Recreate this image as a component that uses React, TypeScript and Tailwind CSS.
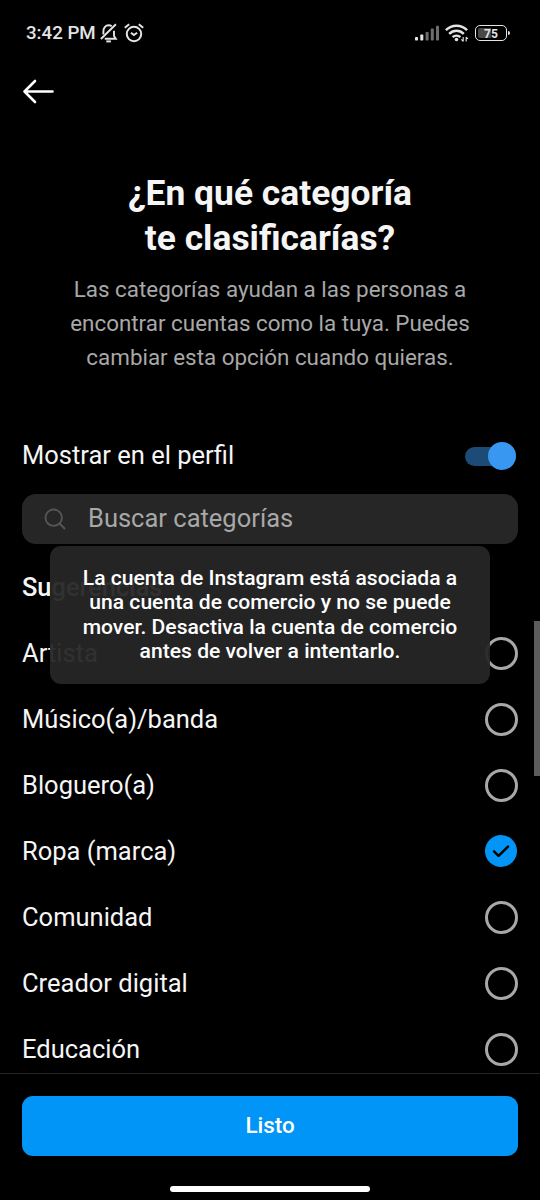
interface Category {
  name: string;
  selected?: boolean;
}

const categories: Category[] = [
  { name: 'Artista' },
  { name: 'Músico(a)/banda' },
  { name: 'Bloguero(a)' },
  { name: 'Ropa (marca)', selected: true },
  { name: 'Comunidad' },
  { name: 'Creador digital' },
  { name: 'Educación' },
];

function StatusBar() {
  return (
    <div className="flex h-[66px] shrink-0 items-center justify-between pl-[26px] pr-[30px] text-[#e4e4e4]">
      <div className="flex items-center">
        <span className="w-[74px] whitespace-nowrap pt-px text-[18.7px] font-medium leading-none">3:42 PM</span>
        {/* Silencio */}
        <svg width="18" height="20" viewBox="0 0 18 20" fill="none" stroke="currentColor" strokeWidth="1.9">
          <path d="M3.4 11.5V8.3C3.4 5 5.4 2.3 8.6 2.3c1.3 0 2.3.3 3.1.9M14 7.8V13l1.8 2.8H4.8" />
          <path d="M15.9 1.2.9 16" />
          <path d="M6.3 18.4h4.6" strokeWidth="2" />
        </svg>
        {/* Alarma */}
        <svg className="ml-[6px]" width="20" height="20" viewBox="0 0 20 20" fill="none" stroke="currentColor" strokeWidth="2">
          <circle cx="10" cy="11" r="7.2" />
          <path d="M.8 4.8 5.2 1.3M19.2 4.8l-4.4-3.5M7 9.7l2.9 2.4 3.2-2.4" />
        </svg>
      </div>

      <div className="flex items-center">
        <svg width="25" height="16" viewBox="0 0 25 16" fill="currentColor">
          <rect x="0" y="12" width="3" height="3.5" rx=".7" />
          <rect x="5.3" y="9.5" width="3" height="6" rx=".7" />
          <g fill="#6c6c6c">
            <rect x="10.6" y="7" width="3" height="8.5" rx=".7" />
            <rect x="15.8" y="3.6" width="3" height="11.9" rx=".7" />
            <rect x="21" y=".7" width="3" height="14.8" rx=".7" />
          </g>
        </svg>
        <svg className="ml-[5px]" width="24" height="18" viewBox="0 0 24 18" fill="none" stroke="currentColor" strokeWidth="2.5">
          <path d="M.9 6.2c6-5.9 15.2-5.9 21.2 0M4.2 9.9c4.2-4.1 10.4-4.1 14.6 0M7.6 13.2c2.3-2.1 5.5-2.1 7.8 0" />
          <circle cx="11.5" cy="15.5" r="1.8" fill="currentColor" stroke="none" />
          <path d="M18.2 13v4.4m-1.8-2 1.8 2M21.2 17.5V13m1.8 2-1.8-2" strokeWidth="1.1" />
        </svg>
        <div className="ml-[6px] flex h-[16px] w-[32px] items-center justify-center rounded-[5px] border-[1.5px] border-[#e4e4e4] bg-black p-[2px]">
          <span className="flex h-full w-full items-center justify-center rounded-[2px] bg-linear-to-r from-[#484848] from-50% to-black to-50% pt-px text-[12px] font-bold leading-none">
            75
          </span>
        </div>
        <span className="ml-px h-[4px] w-[2px] rounded-r bg-[#e4e4e4]" />
      </div>
    </div>
  );
}

function Radio({ selected }: { selected?: boolean }) {
  if (!selected) {
    return <span className="size-[33px] rounded-full border-3 border-[#a8a8a8]" />;
  }
  return (
    <span className="mr-px flex size-8 items-center justify-center rounded-full bg-[#0095f6]">
      <svg width="18" height="14" viewBox="0 0 18 14" fill="none" stroke="#000" strokeWidth="2.5" strokeLinecap="round" strokeLinejoin="round">
        <path d="M2 7.4 6.6 11.8 16 2.6" />
      </svg>
    </span>
  );
}

function Toast() {
  return (
    <div className="absolute left-[50px] top-[546px] h-[138px] w-[440px] rounded-[11px] bg-[#262626]/95 pt-[20px] text-center text-[21.1px] font-medium leading-[24.4px] text-white">
      La cuenta de Instagram está asociada a
      <br />
      una cuenta de comercio y no se puede
      <br />
      mover. Desactiva la cuenta de comercio
      <br />
      antes de volver a intentarlo.
    </div>
  );
}

export default function App() {
  return (
    <div className="relative flex h-[1200px] w-[540px] flex-col overflow-hidden bg-black font-['Roboto',sans-serif] text-[#f5f5f5]">
      <StatusBar />

      <header className="flex h-[50px] shrink-0 items-center pl-[22px]">
        <svg width="33" height="25" viewBox="0 0 33 25" fill="none" stroke="#fff" strokeWidth="2.6" strokeLinecap="round" strokeLinejoin="round">
          <path d="M30.5 12.5H2.5M13 2 2.5 12.5 13 23" />
        </svg>
      </header>

      <main className="flex min-h-0 flex-1 flex-col overflow-hidden px-[22px]">
        <h1 className="mt-[55px] text-center text-[35.4px] font-bold leading-[45px]">
          ¿En qué categoría
          <br />
          te clasificarías?
        </h1>
        <p className="mt-[11px] text-center text-[22.4px] leading-[34px] text-[#a8a8a8]">
          Las categorías ayudan a las personas a
          <br />
          encontrar cuentas como la tuya. Puedes
          <br />
          cambiar esta opción cuando quieras.
        </p>

        <div className="mt-[49px] flex h-[66px] shrink-0 items-center justify-between">
          <span className="pb-[2px] text-[25.5px]">Mostrar en el perfil</span>
          <span className="mr-[2px] flex h-[19px] w-[51px] items-center justify-end rounded-full bg-[#1d4b77]">
            <span className="size-[28px] shrink-0 rounded-full bg-[#3897f0]" />
          </span>
        </div>

        <div className="mt-[5px] flex h-[50px] shrink-0 items-center rounded-[14px] bg-[#262626] pl-[22px]">
          <svg width="22" height="22" viewBox="0 0 22 22" fill="none" stroke="#555" strokeWidth="1.9" strokeLinecap="round">
            <circle cx="9.7" cy="9.7" r="8.2" />
            <path d="m15.7 15.7 4.8 4.8" />
          </svg>
          <span className="ml-[22px] pb-[2px] text-[25.5px] text-[#a8a8a8]">Buscar categorías</span>
        </div>

        <h2 className="mt-[10px] flex h-[66px] shrink-0 items-center text-[25.4px] font-medium">Sugerencias</h2>
        <ul>
          {categories.map((category) => (
            <li key={category.name} className="flex h-[66px] items-center justify-between">
              <span className="text-[25.5px]">{category.name}</span>
              <Radio selected={category.selected} />
            </li>
          ))}
        </ul>
      </main>

      <footer className="flex h-[127px] shrink-0 flex-col items-center border-t border-[#262626] px-[22px] pt-[22px]">
        <button className="h-[60px] w-full rounded-[11px] bg-[#0095f6] text-[22.4px] font-medium text-white">Listo</button>
        <span className="mt-[30px] h-[6px] w-[200px] rounded-full bg-white" />
      </footer>

      {/* Barra de desplazamiento */}
      <span className="absolute right-0 top-[621px] h-[155px] w-[6px] bg-[#5c5c5c]" />
      <Toast />
    </div>
  );
}
